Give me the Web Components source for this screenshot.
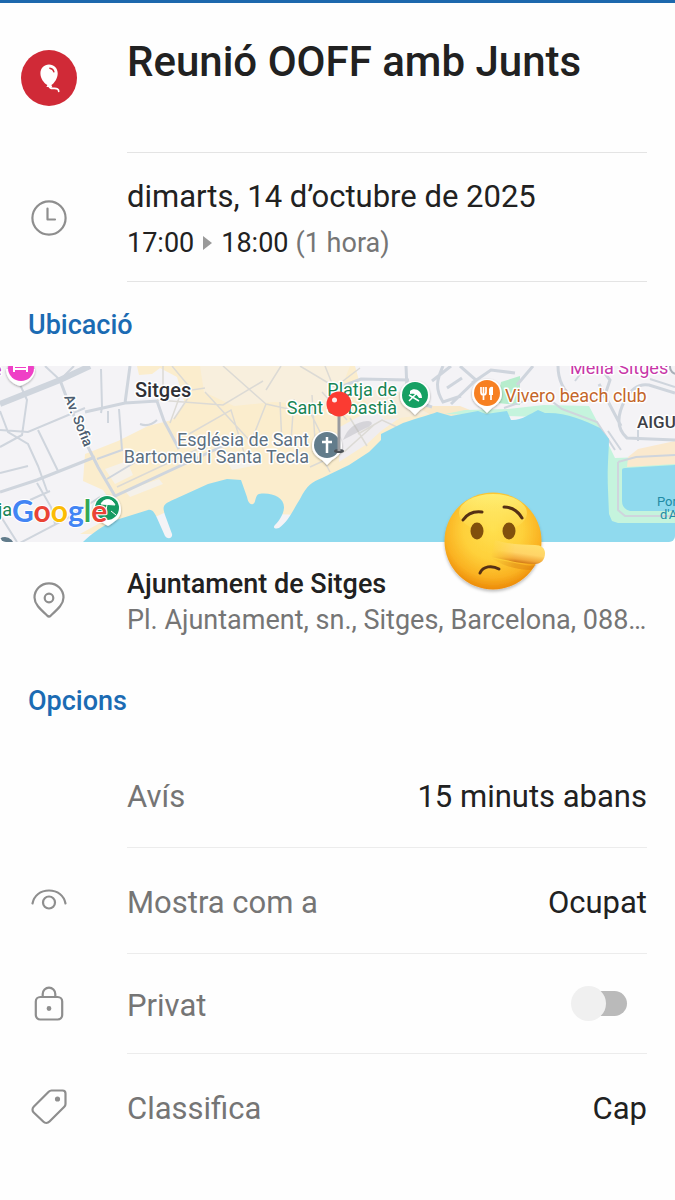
<!DOCTYPE html>
<html lang="ca">
<head>
<meta charset="utf-8">
<meta name="viewport" content="width=device-width, initial-scale=1">
<title>Reunió OOFF amb Junts</title>
<style>
    body {
        margin: 0;
        background: #fefefe;
        color: #212121;
        font-family: Roboto, "Liberation Sans", sans-serif;
    }
</style>
</head>
<body>
<event-page>
    <detail-row icon="balloon" variant="title" divider>
        <h1>Reunió OOFF amb Junts</h1>
    </detail-row>
    <detail-row icon="clock" variant="time" divider>
        <event-time date="dimarts, 14 d’octubre de 2025" start="17:00" end="18:00" duration="(1 hora)"></event-time>
    </detail-row>
    <section-title>Ubicació</section-title>
    <location-map></location-map>
    <detail-row icon="place">
        <event-place name="Ajuntament de Sitges" address="Pl. Ajuntament, sn., Sitges, Barcelona, 08870 Sitges"></event-place>
    </detail-row>
    <section-title>Opcions</section-title>
    <option-row label="Avís" value="15 minuts abans" divider></option-row>
    <option-row icon="eye" label="Mostra com a" value="Ocupat" divider></option-row>
    <option-row icon="lock" label="Privat" type="switch" divider></option-row>
    <option-row icon="tag" label="Classifica" value="Cap"></option-row>
</event-page>

<script>
const ICONS = {
    balloon: `<svg width="56" height="56" viewBox="0 0 56 56">
        <circle cx="28" cy="28" r="28" fill="#d02a37"/>
        <path d="M28 14.500c5 0 8.700 3.800 8.700 8.700 0 5.300-3.400 9.800-6.300 11.900l.8 1.800h-5.800l1-1.800c-3.500-2.100-7-6.600-7-11.900 0-4.900 3.700-8.700 8.600-8.700z" fill="#fff"/>
        <path d="M28.800 18.200c2.300.3 3.600 1.500 4.100 3.600" fill="none" stroke="#d02a37" stroke-width="1.400" stroke-linecap="round"/>
        <path d="M28 36c.5 2 2 2.600 4.500 2.400 3.600-.2 5.300.5 5.200 3" fill="none" stroke="#fff" stroke-width="1.700" stroke-linecap="round"/>
    </svg>`,
    clock: `<svg width="36" height="36" viewBox="0 0 36 36" class="line">
        <circle cx="18" cy="18" r="16.600"/><path d="M16.500 8.500v11h7.500"/>
    </svg>`,
    place: `<svg width="36" height="36" viewBox="0 0 36 36" class="line">
        <path d="M18 1.300c8.200 0 14.500 6.400 14.500 14.200 0 6.400-5 11-12.700 18.100a2.600 2.600 0 0 1-3.600 0C8.500 26.500 3.500 21.900 3.500 15.500 3.500 7.700 9.800 1.300 18 1.300z"/>
        <circle cx="18" cy="16" r="4.300"/>
    </svg>`,
    eye: `<svg width="36" height="36" viewBox="0 0 36 36" class="line">
        <path d="M1.500 20.500C3 12.500 9.500 7.500 18 7.500s15 5 16.500 13"/><circle cx="18" cy="19.500" r="6"/>
    </svg>`,
    lock: `<svg width="36" height="36" viewBox="0 0 36 36" class="line">
        <rect x="4.800" y="11" width="26.400" height="22.500" rx="4.500"/>
        <path d="M11.700 10.500V8a6.300 6.300 0 0 1 12.600 0v2.500"/><circle cx="18" cy="22.500" r="1.300" fill="#8e8e8e"/>
    </svg>`,
    tag: `<svg width="36" height="36" viewBox="0 0 36 36" class="line">
        <path d="M20.500 1.500h11a3 3 0 0 1 3 3v10.500a4 4 0 0 1-1.200 2.800L18.500 32.500a4.500 4.500 0 0 1-6.300 0L2.700 23.500a4 4 0 0 1 0-5.700L17.700 2.700a4 4 0 0 1 2.800-1.200z"/>
        <circle cx="26.500" cy="10" r="1.500" fill="#8e8e8e"/>
    </svg>`
};

const ICON_STYLES = `
    .icon { flex: 0 0 98px; display: flex; justify-content: center; }
    .icon svg { display: block; }
    .line { fill: none; stroke: #8e8e8e; stroke-width: 2.2; stroke-linecap: round; stroke-linejoin: round; }
`;

class EventPage extends HTMLElement {
    constructor() {
        super();
        this.attachShadow({ mode: "open" }).innerHTML = `
        <style>
            :host { display: block; border-top: 3px solid #1d68ad; }
        </style>
        <main><slot></slot></main>
    `;
    }
}

class DetailRow extends HTMLElement {
    constructor() {
        super();
        this.attachShadow({ mode: "open" });
        this.shadowRoot.innerHTML = `
        <style>
            :host { display: flex; align-items: center; gap: 29px; padding-right: 28px; }
            ${ICON_STYLES}
            .body { flex: 1; min-width: 0; padding: 24px 0 20px; }
            :host([divider]) .body { border-bottom: 1px solid #e4e4e4; }
            :host([variant="title"]) .body { padding: 34px 0 65px; }
            :host([variant="time"]) .body { padding: 24px 0 18px; }
            ::slotted(h1) { margin: 0; font-size: 42px; line-height: 50px; font-weight: 500; }
        </style>
        <div class="icon">${ICONS[this.getAttribute("icon")] || ""}</div>
        <div class="body"><slot></slot></div>
    `;
    }
}

class EventTime extends HTMLElement {
    constructor() {
        super();
        this.attachShadow({ mode: "open" });
        this.shadowRoot.innerHTML = `
        <style>
            :host { display: flex; flex-direction: column; gap: 6px; line-height: 40px; }
            .date { font-size: 31px; }
            .hours { display: flex; align-items: center; gap: 7px; font-size: 27px; }
            .hours svg { margin: 0 2px; }
            .duration { color: #757575; }
        </style>
        <div class="date">${this.getAttribute("date")}</div>
        <div class="hours">
            <time>${this.getAttribute("start")}</time>
            <svg width="9" height="14" viewBox="0 0 9 14"><path d="M0 0l9 7-9 7z" fill="#9a9a9a"/></svg>
            <time>${this.getAttribute("end")}</time>
            <span class="duration">${this.getAttribute("duration")}</span>
        </div>
    `;
    }
}

class EventPlace extends HTMLElement {
    constructor() {
        super();
        this.attachShadow({ mode: "open" });
        this.shadowRoot.innerHTML = `
        <style>
            :host { display: block; font-size: 27px; line-height: 36px; }
            .name { font-weight: 500; }
            .address { color: #757575; overflow: hidden; white-space: nowrap; text-overflow: ellipsis; }
        </style>
        <div class="name">${this.getAttribute("name")}</div>
        <div class="address">${this.getAttribute("address")}</div>
    `;
    }
}

class SectionTitle extends HTMLElement {
    constructor() {
        super();
        this.attachShadow({ mode: "open" }).innerHTML = `
        <style>
            :host { display: block; padding: 25px 28px 23px; }
            h2 { margin: 0; font-size: 27px; line-height: 36px; font-weight: 500; color: #1b6bb3; }
        </style>
        <h2><slot></slot></h2>
    `;
    }
}

class OptionRow extends HTMLElement {
    constructor() {
        super();
        this.attachShadow({ mode: "open" });
        this.render();
    }

    render() {
        const control = this.getAttribute("type") === "switch"
            ? `<input id="control" type="checkbox" role="switch">`
            : `<button id="control" type="button">${this.getAttribute("value")}</button>`;

        this.shadowRoot.innerHTML = `
        <style>
            :host { display: flex; align-items: center; gap: 29px; padding-right: 28px; font-size: 31px; }
            ${ICON_STYLES}
            .body {
                flex: 1;
                display: flex;
                align-items: center;
                justify-content: space-between;
                box-sizing: border-box;
                min-height: 106px;
                line-height: 40px;
            }
            :host([type="switch"]) .body { min-height: 100px; }
            :host([divider]) .body { border-bottom: 1px solid #ececec; }
            label { padding-top: 4px; color: #757575; }
            button { padding: 4px 0 0; border: 0; background: none; color: inherit; font: inherit; text-align: right; }
            input {
                appearance: none;
                display: flex;
                align-items: center;
                width: 48px;
                height: 25px;
                margin: 0 20px 0 0;
                border-radius: 13px;
                background: #bababa;
            }
            input::before {
                content: "";
                flex: none;
                width: 35px;
                height: 35px;
                margin-left: -8px;
                border-radius: 50%;
                background: #f0f0f0;
            }
            input:checked { justify-content: flex-end; background: #8db8dd; }
            input:checked::before { background: #1b6bb3; }
        </style>
        <div class="icon">${ICONS[this.getAttribute("icon")] || ""}</div>
        <div class="body">
            <label for="control">${this.getAttribute("label")}</label>
            ${control}
        </div>
    `;
    }
}

class LocationMap extends HTMLElement {
    constructor() {
        super();
        this.attachShadow({ mode: "open" });
        this.shadowRoot.innerHTML = `
        <style>
            :host { display: block; position: relative; }
            .map { display: block; width: 100%; height: auto; border-radius: 0 0 6px 6px; }
            /* sticker hangs over the lower edge of the map */
            lying-face { position: absolute; left: 65%; bottom: -54px; z-index: 1; }
            text { font-size: 18px; stroke: #fff; stroke-width: 3px; stroke-linejoin: round; paint-order: stroke; }
            .town { font-size: 20px; font-weight: 500; fill: #2f3035; }
            .street { font-size: 14px; font-weight: 500; fill: #4d5d6f; }
            .church { fill: #5d7080; }
            .beach { fill: #188554; }
            .food { fill: #c4662a; }
            .hotel { fill: #c837a8; }
            .area { font-size: 17px; font-weight: 500; fill: #3d4046; }
            .port { font-size: 13px; fill: #218ba5; stroke: none; }
            .google { font-family: Lato, sans-serif; font-size: 30px; font-weight: 700; stroke-width: 2px; }
            .road { fill: none; stroke: #cfd5dd; stroke-width: 2; }
            .wide { stroke-width: 3; }
            .main { stroke-width: 6; }
            .old .road { stroke: #dcdad5; stroke-width: 1.5; }
        </style>
        <svg class="map" viewBox="0 366 675 176" role="img" aria-label="Mapa de Sitges">
            <defs>
                <filter id="shade" x="-30%" y="-30%" width="160%" height="170%">
                    <feDropShadow dx="0" dy="1" stdDeviation="1" flood-opacity=".35"/>
                </filter>
            </defs>
            <rect y="366" width="675" height="176" fill="#f4f3f6"/>
            <path d="M137 366h218l5 18 30 18 40 5 14 10-48 14-12 16-60 32-24 36-25-1-65-22-92 42H80l38-21-15-23-20-9 2-27 33-13 30-15 24-6 13-16-8-27-17-9-8 6-13 1z" fill="#fbedcd"/>
            <path d="M105 469l22-8 6 14-18 9zM125 491l34-12 4 5-33 13zM222 452l36 0 4 12-30 6z" fill="#f5f1ea"/>
            <path d="M200 366h150l-16 40-60-4-40 4-30-14z" fill="#f8efdd"/>
            <path d="M340 427l18-10 30-13 20 8-27 19-14 13-28 18z" fill="#efedf0"/>
            <path d="M355 390h40l35 16 15 8-15 0-45 6z" fill="#f7eddb"/>
            <path d="M501 382l19-6v29l-23-2z" fill="#b7edcd"/>
            <path d="M415 406h45l20 8-40 6z" fill="#f9e8ca"/>
            <path d="M445 414l20-4 42-1 37-4 45 1 10 19 16 33 60-2v67h-66l-8-85-35-20z" fill="#c5f4dd"/>
            <path d="M628 457l10-8 37-8v23l-48 3z" fill="#fae9ce"/>

            <g class="road">
                <path class="main" d="M0 404l60-24 30-14"/>
                <path class="wide" d="M60 380l6 16 14 35 18 36 17 29 110-51M0 492l37-12 58-23M85 412l40-9 32-2 7 20 15 28M130 366l-5 37"/>
                <path d="M0 411l8 21 20 12 10 22 9 25M0 430l28 2 57-24M0 447l22-12 5-35-9-20M38 430l20 41M101 369l1 38-1 6M119 409l3 41-25 9M0 473l28-7M37 483l14 24 4 17M30 500l20-9M18 544l48-25 34-22M107 479l35-21M0 515l17 27M108 411v12M140 424c8 3 13 0 17-4M60 380l-15-14M62 378l12-12"/>
            </g>
            <g class="old">
                <path class="road" d="M163 366v30M172 366l20 24 13-2M182 390l-12 33M190 395l-16 24M157 400l66 5 40-24M189 434l42-24 16 52M205 392l46 50M223 366l43 38M266 390l15-24M266 404l45 10 14 28M266 404l-15 38M280 402l2 42M294 399l-3 42M312 395l3 45M322 392l25 28M300 366l35 21 25-19M325 366l8 20M117 487l98-46M310 467l35-16 30-27M330 472l-9-17M350 418l17 28M358 434l24-14 17 8"/>
            </g>
            <g class="road">
                <path class="wide" d="M343 386l18-7 48 1M406 366c1 18 0 25 4 34l22 7M443 366c-4 10-10 20 0 36l18-6M432 381l19-15M447 388l15-10M460 366l16 14-25 24M472 383l19-13 24 3M517 385l16-19"/>
                <path class="wide" d="M675 393l-26-8c-11-2-18 4-24 15-10 19-6 31 2 38l48 2M558 366c0 28 23 45 47 29l5-15-11-14M599 384l13 25 9 17"/>
                <path d="M545 396l17 13 35 13 18 28M504 408l37-13M650 379l25 8M638 430v11M618 462l18-5 39-2M618 462v48l7 6h50M575 381l9-12M608 431l13 19"/>
            </g>

            <!-- sea, from the west beach round to the marina -->
            <path d="M83 542C92 533 104 525 116 520L148 510C153 509 155 514 157 518L165 536C168 540 173 538 172 534L165 515C162 506 163 504 175 499L208 484 227 479 241 480 247 497C248 502 250 505 253 504S255 495 259 494C271 492 284 497 284 507 284 514 279 521 275 525 272 528 276 529 279 528 289 521 294 508 300 499 307 485 312 482 322 478L349 465 369 452 381 440V434L403 423C418 418 429 415 437 412L451 416 478 411 486 414 507 411 511 420C520 421 530 414 538 410L545 413C565 412 584 420 600 428L609 439C609 449 607 470 608 490L609 514 612 521 618 523H675V542z" fill="#90daee"/>
            <path d="M622 470q0-2 3-2l50-3v46h-45q-8-2-8-10z" fill="#90daee"/>

            <g filter="url(#shade)">
                <path d="M20 386c-8-2-14-8-14-17h29c0 9-7 14-15 17z" fill="#fff"/>
                <circle cx="21" cy="368" r="13" fill="#ef3fc6"/>
                <path d="M14 363v9m0-3h13v3m-13-6h13v3" stroke="#fff" stroke-width="2" fill="none"/>
            </g>
            <g filter="url(#shade)">
                <path d="M107 495c10 0 14 7 14 15 0 7-4 10-13 16-9-6-15-8-15-16s6-15 14-15z" fill="#fff"/>
                <circle cx="107" cy="508" r="12" fill="#159b63"/>
                <path d="M101 504c3-6 11-6 14 1zM107 505l-2 10M111 511l5 4" fill="#fff" stroke="#fff"/>
            </g>
            <g filter="url(#shade)">
                <path d="M415 381c9 0 15 6 15 15 0 7-5 11-10 14l-5 5-5-5c-5-3-10-7-10-14 0-9 6-15 15-15z" fill="#fff"/>
                <circle cx="415" cy="395" r="13" fill="#14a064"/>
                <path d="M410 391c4-4 12-1 12 7l-3 0c-2-4-4-5-9-4z" fill="#fff"/>
                <path d="M417 393l-8 8M409 395l10 6" stroke="#fff" stroke-width="1.500"/>
            </g>
            <g filter="url(#shade)">
                <path d="M487 379c9 0 15 6 15 15 0 7-5 11-10 14l-5 5-5-5c-5-3-10-7-10-14 0-9 6-15 15-15z" fill="#fff"/>
                <circle cx="487" cy="393" r="13" fill="#f78024"/>
                <path d="M481 387v5q0 3 2.500 3t2.500-3v-5M483.500 387v13M491 400v-6" fill="none" stroke="#fff" stroke-width="1.700"/>
                <path d="M489 395v-6q1-3 4-2v8z" fill="#fff"/>
            </g>
            <g filter="url(#shade)">
                <path d="M327 431c9 0 15 6 15 15 0 7-5 11-10 14l-5 5-5-5c-5-3-10-7-10-14 0-9 6-15 15-15z" fill="#fff"/>
                <circle cx="327" cy="445" r="13" fill="#627c8b"/>
                <path d="M327 437v16M322 442h10" stroke="#fff" stroke-width="2.500"/>
            </g>
            <circle cx="5" cy="546" r="9" fill="#627c8b"/>

            <text class="town" x="135" y="397">Sitges</text>
            <text class="street" x="64" y="397" transform="rotate(68 64 397)">Av. Sofia</text>
            <text class="church" x="309" y="446" text-anchor="end">Església de Sant</text>
            <text class="church" x="309" y="463" text-anchor="end">Bartomeu i Santa Tecla</text>
            <text class="beach" x="397" y="396" text-anchor="end">Platja de</text>
            <text class="beach" x="397" y="414" text-anchor="end">Sant Sebastià</text>
            <text class="food" x="505" y="402">Vivero beach club</text>
            <text class="hotel" x="570" y="374">Melia Sitges</text>
            <circle cx="677" cy="367" r="7" fill="none" stroke="#a9b0b8" stroke-width="2"/>
            <text class="hotel" x="-8" y="376">e</text>
            <text class="area" x="637" y="428">AIGU</text>
            <text class="port" x="657" y="506">Por</text>
            <text class="port" x="660" y="519">d'A</text>
            <text class="beach" x="-2" y="516">ja</text>
            <text class="google" x="12" y="522"><tspan fill="#4285f4">G</tspan><tspan fill="#ea4335">o</tspan><tspan fill="#fbbc05">o</tspan><tspan fill="#4285f4">g</tspan><tspan fill="#34a853">l</tspan><tspan fill="#ea4335">e</tspan></text>

            <!-- pin -->
            <path d="M343 440c5-12 12-18 25-19 8 1 2 6-4 8z" fill="#a7a7b0" opacity=".35"/>
            <ellipse cx="339" cy="451" rx="5" ry="2" fill="#4b5157"/>
            <path d="M339 416v35" stroke="#999b9f" stroke-width="3"/>
            <circle cx="339" cy="404" r="12.500" fill="#fb3b32"/>
            <circle cx="334.500" cy="400" r="2.500" fill="#fff" opacity=".9"/>
        </svg>
        <lying-face></lying-face>
    `;
    }
}

class LyingFace extends HTMLElement {
    constructor() {
        super();
        this.attachShadow({ mode: "open" }).innerHTML = `
        <style>
            :host { display: block; width: 110px; height: 110px; }
            svg { display: block; }
        </style>
        <svg width="110" height="110" viewBox="0 0 110 110" role="img" aria-label="Cara de mentider">
            <defs>
                <radialGradient id="skin" cx=".5" cy=".38" r=".62">
                    <stop offset="0" stop-color="#ffe04f"/>
                    <stop offset=".5" stop-color="#fed03a"/>
                    <stop offset=".8" stop-color="#fab222"/>
                    <stop offset="1" stop-color="#ec8a07"/>
                </radialGradient>
                <linearGradient id="top" x1="0" y1="0" x2="0" y2="1">
                    <stop offset="0" stop-color="#fff27a" stop-opacity=".9"/>
                    <stop offset="1" stop-color="#fff27a" stop-opacity="0"/>
                </linearGradient>
                <linearGradient id="nose" gradientUnits="userSpaceOnUse" x1="82" y1="57" x2="79" y2="77">
                    <stop offset="0" stop-color="#ffdf6c"/>
                    <stop offset=".5" stop-color="#ffd467"/>
                    <stop offset=".8" stop-color="#f2a93a"/>
                    <stop offset="1" stop-color="#cc7010"/>
                </linearGradient>
                <linearGradient id="fade" gradientUnits="userSpaceOnUse" x1="52" y1="0" x2="76" y2="0">
                    <stop offset="0" stop-color="#000"/>
                    <stop offset="1" stop-color="#fff"/>
                </linearGradient>
                <mask id="noseFade" maskUnits="userSpaceOnUse" x="0" y="0" width="110" height="110">
                    <rect width="110" height="110" fill="url(#fade)"/>
                </mask>
                <filter id="shadow" x="-20%" y="-20%" width="140%" height="150%">
                    <feDropShadow dx="0" dy="2" stdDeviation="1.500" flood-opacity=".25"/>
                </filter>
            </defs>
            <g filter="url(#shadow)">
                <circle cx="54" cy="55" r="48.500" fill="url(#skin)"/>
            </g>
            <ellipse cx="54" cy="27" rx="34" ry="19" fill="url(#top)"/>
            <ellipse cx="38" cy="45" rx="6.500" ry="8.500" fill="#81500c"/>
            <ellipse cx="70" cy="45" rx="6.500" ry="8.500" fill="#81500c"/>
            <path d="M24 34c4-6 11-9 19-8M65 21c8 0 14 4 18 11" fill="none" stroke="#553014" stroke-width="3" stroke-linecap="round"/>
            <path d="M41 87c3-7 12-8 19-4" fill="none" stroke="#553014" stroke-width="3" stroke-linecap="round"/>
            <g mask="url(#noseFade)">
                <path d="M52 72c12 3 24 5 34 7 4 1 8 1 11 0l-5 5c-14 0-28-4-40-12z" fill="#cf6f0b" opacity=".35"/>
                <path d="M56 54c12 4 27 5 40 5 6 0 10 3 10 8 0 7-4 11-10 11-13 0-28-4-44-7z" fill="url(#nose)"/>
            </g>
        </svg>
    `;
    }
}

customElements.define("event-page", EventPage);
customElements.define("detail-row", DetailRow);
customElements.define("event-time", EventTime);
customElements.define("event-place", EventPlace);
customElements.define("section-title", SectionTitle);
customElements.define("option-row", OptionRow);
customElements.define("lying-face", LyingFace);
customElements.define("location-map", LocationMap);
</script>
</body>
</html>
